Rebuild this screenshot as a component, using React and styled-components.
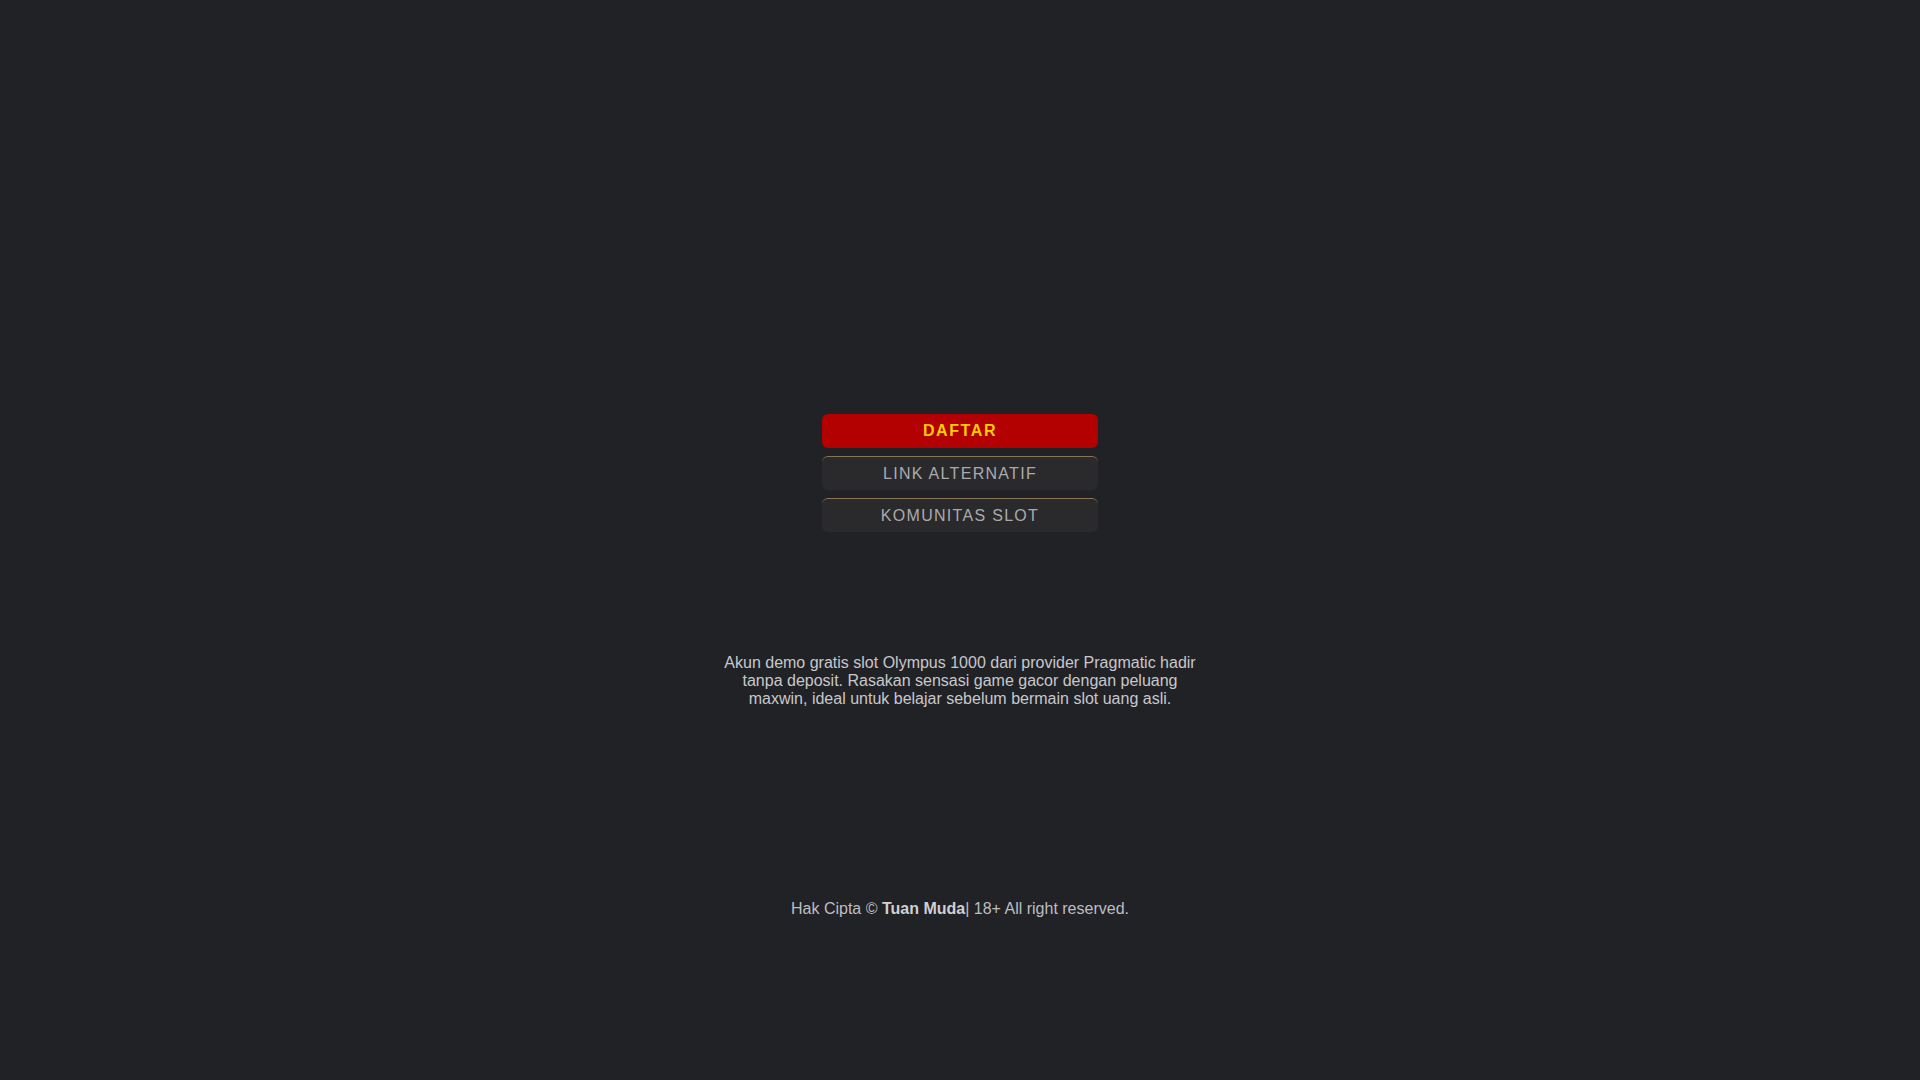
import styled, { createGlobalStyle } from "styled-components"

const Global = createGlobalStyle`
    html, body {
        margin: 0;
        padding: 0;
        background-color: #212226;
        font-family: "Liberation Sans", Arial, sans-serif;
    }
`

export default function App() {
    return (
        <>
            <Global />
            <Pagina>
                <Menu>
                    <Botao $destaque>DAFTAR</Botao>
                    <Botao>LINK ALTERNATIF</Botao>
                    <Botao>KOMUNITAS SLOT</Botao>
                </Menu>
                <Descricao>
                    Akun demo gratis slot Olympus 1000 dari provider Pragmatic hadir tanpa deposit. Rasakan sensasi game gacor dengan peluang maxwin, ideal untuk belajar sebelum bermain slot uang asli.
                </Descricao>
                <Rodape>
                    Hak Cipta © <strong>Tuan Muda</strong>| 18+ All right reserved.
                </Rodape>
            </Pagina>
        </>
    )
}

const Pagina = styled.div`
    min-height: 100vh;
    display: flex;
    flex-direction: column;
    align-items: center;
    padding-top: 414px;
    box-sizing: border-box;
`

const Menu = styled.div`
    width: 276px;
    display: flex;
    flex-direction: column;
    gap: 8px;
`

const Botao = styled.a`
    display: flex;
    align-items: center;
    justify-content: center;
    height: 34px;
    box-sizing: border-box;
    border-radius: 6px;
    font-size: 16px;
    letter-spacing: ${p => (p.$destaque ? "1.6px" : "1.3px")};
    text-decoration: none;
    cursor: pointer;
    background-color: ${p => (p.$destaque ? "#b30000" : "#2a2a2c")};
    color: ${p => (p.$destaque ? "#ffcc00" : "#aaaaae")};
    font-weight: ${p => (p.$destaque ? 700 : 400)};
    border-top: ${p => (p.$destaque ? "none" : "1px solid #8a7656")};
`

const Descricao = styled.p`
    width: 480px;
    margin: 122px 0 0 0;
    text-align: center;
    color: #c8c8cc;
    font-size: 16px;
    line-height: 18px;
`

const Rodape = styled.div`
    margin-top: 192px;
    color: #bdbdc1;
    font-size: 16px;
    line-height: 18px;
    strong {
        color: #d0d0d4;
    }
`
